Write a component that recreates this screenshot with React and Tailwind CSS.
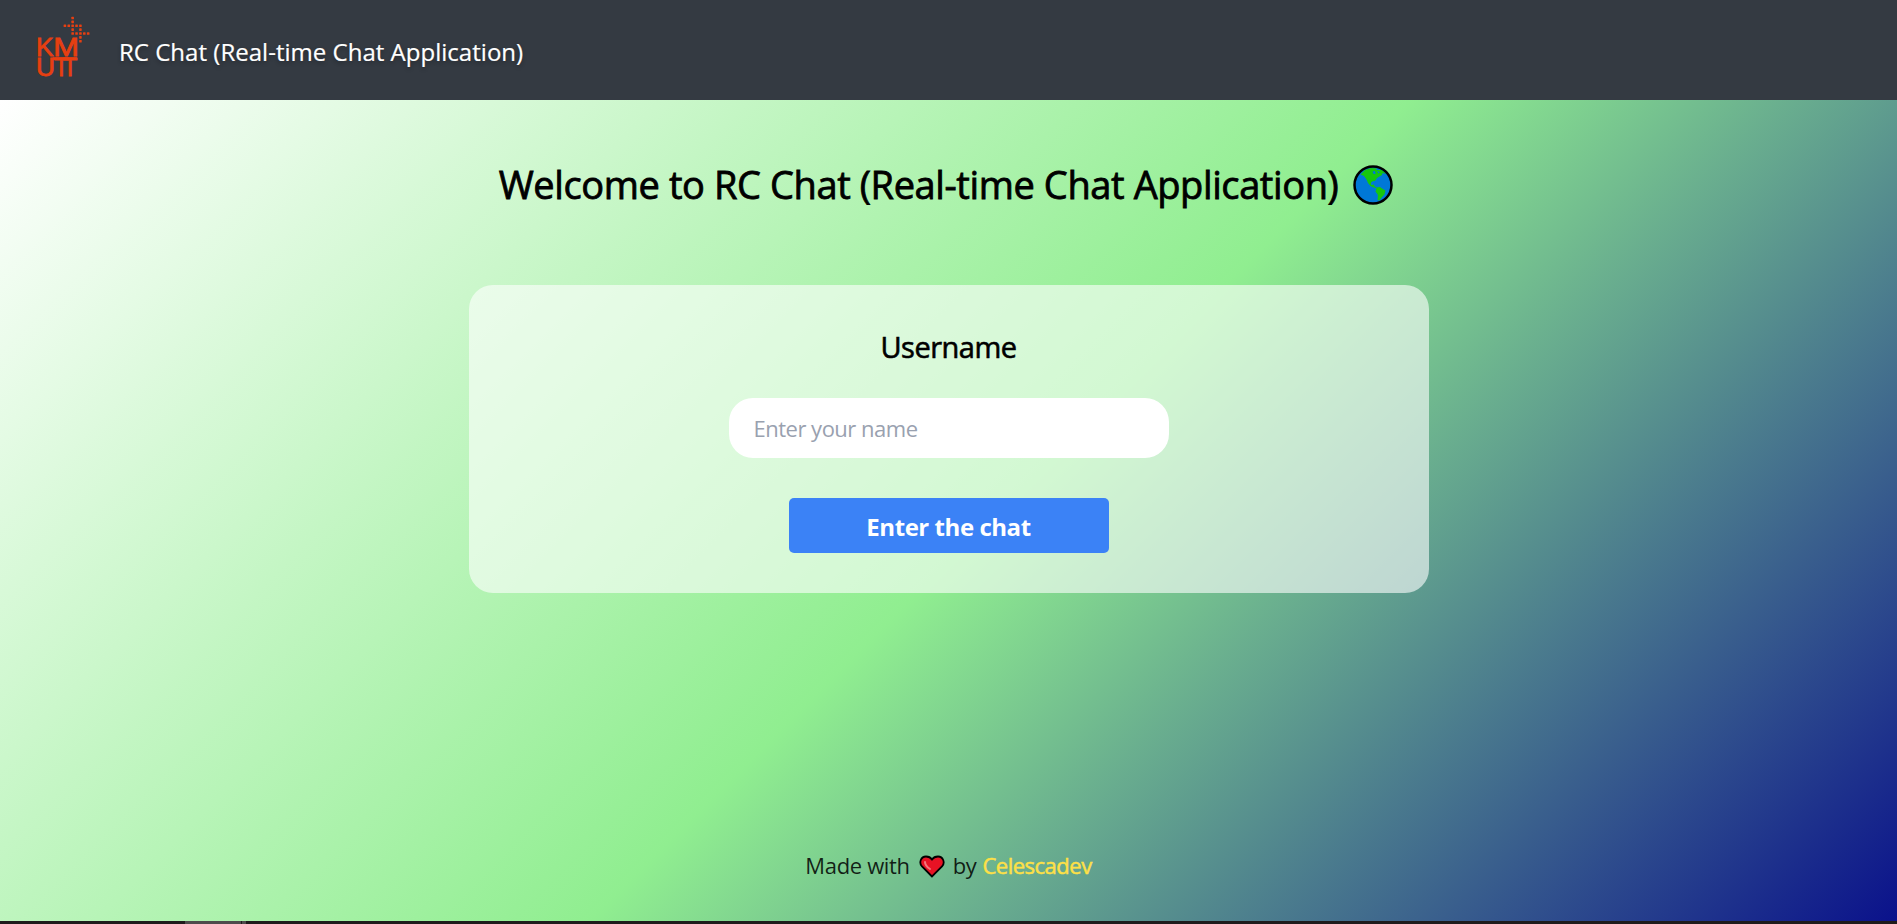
function Logo() {
  const dots = [
    [2, 0], [2, 1], [0, 2], [1, 2], [2, 2], [3, 2], [4, 2], [2, 3], [4, 3],
    [2, 4], [3, 4], [4, 4], [5, 4], [6, 4], [4, 5], [4, 6],
  ];
  const type = { fontFamily: "Liberation Sans", fontSize: 26.6, stroke: "#e73f11", strokeWidth: 0.8 };
  return (
    <svg className="block h-[100px] w-[119px] shrink-0" viewBox="0 0 119 100" fill="#e73f11">
      {dots.map(([c, r]) => (
        <rect key={`${c}-${r}`} x={63.6 + c * 3.88} y={16.7 + r * 3.88} width="2.6" height="2.6" rx="0.6" />
      ))}
      <text x="36" y="56.2" textLength="17.6" lengthAdjust="spacingAndGlyphs" {...type}>K</text>
      <text x="53.3" y="56.2" textLength="25.7" lengthAdjust="spacingAndGlyphs" {...type}>M</text>
      <text x="36" y="75.8" textLength="19" lengthAdjust="spacingAndGlyphs" {...type}>U</text>
      <text transform="scale(0.9 1)" x="60 69.6" y="75.8" {...type}>TT</text>
      <rect x="52.8" y="57.2" width="24.2" height="2.8" />
    </svg>
  );
}

function Globe() {
  return (
    <svg className="ml-[15px] h-10 w-10 shrink-0" viewBox="0 0 40 40">
      <circle cx="20" cy="20" r="18.5" fill="#0078d7" />
      <path d="M7.500 9.500 L12 5 L18 3 L24 3.500 L23 5 L29 5 L33 9 L29.500 8 L29 10 L26.500 11.500 L24 13 L22 16 L20 16 L18 17.500 L18 20 L21 19.500 L21.500 21.500 L24 22.500 L22 23 L17.500 21 L15 18 L13.500 14.500 L11 11 Z" fill="#16c60c" />
      <path d="M19.500 6.500 L22 6 L22.500 9 L20.500 9 Z M24 6 L27 7 L25.500 8.500 Z" fill="#0078d7" />
      <path d="M23.500 22.500 L27 22 L29 23.500 L32.500 25.500 L31.500 29.500 L29 32 L26.500 35.500 L24.500 35 L25 30 L22.500 26.500 Z" fill="#16c60c" />
      <circle cx="20" cy="20" r="18.5" fill="none" stroke="#000" strokeWidth="2.5" />
    </svg>
  );
}

function Heart() {
  return (
    <svg className="mt-[3px] mr-2 ml-[9px] h-6 w-[26px] shrink-0" viewBox="0 0 26 24">
      <path d="M13 21.500 L3 11.500 C-0.500 7.500 2 1.500 7 1.500 C10 1.500 12 3 13 4.500 C14 3 16 1.500 19 1.500 C24 1.500 26.500 7.500 23 11.500 Z" fill="#e81224" stroke="#000" strokeWidth="1.8" />
      <path d="M6 7 C6 9.500 8 12 11 14" fill="none" stroke="#f4767c" strokeWidth="2" strokeLinecap="round" />
    </svg>
  );
}

export default function App() {
  return (
    <div className="flex h-[924px] flex-col overflow-hidden font-['Open_Sans','Noto_Sans',sans-serif]">
      <header className="flex h-[100px] shrink-0 items-center bg-[#343a42] text-white">
        <Logo />
        <span className="mt-1 whitespace-nowrap text-[24px] tracking-[0.02px] [-webkit-text-stroke:0.2px_currentColor] [text-shadow:0_2px_4px_rgba(0,0,0,0.3)]">
          RC Chat (Real-time Chat Application)
        </span>
      </header>
      <main className="flex h-[821px] shrink-0 flex-col items-center bg-[linear-gradient(135deg,white,lightgreen,darkblue)] bg-[length:100%_924px] bg-no-repeat">
        <div className="mt-[60px] flex h-[50px] items-center pr-[5px] text-black">
          <h1 className="-mt-0.5 whitespace-nowrap text-[38px] tracking-[-0.4px] [-webkit-text-stroke:0.8px_currentColor]">
            Welcome to RC Chat (Real-time Chat Application)
          </h1>
          <Globe />
        </div>
        <section className="mt-[75px] flex h-[308px] w-[960px] flex-col items-center rounded-3xl bg-white/60 pt-[39px]">
          <label htmlFor="username" className="h-[74px] text-[29px] leading-[45px] tracking-[-0.5px] text-black [-webkit-text-stroke:0.6px_currentColor]">
            Username
          </label>
          <input
            id="username"
            placeholder="Enter your name"
            className="h-[60px] w-[440px] rounded-3xl bg-white px-[25px] text-[22px] tracking-[-0.5px] outline-none placeholder:text-gray-400"
          />
          <button className="mt-10 h-[55px] w-80 rounded-[5px] bg-[#3b82f6] pt-0.5 text-[24px] font-bold tracking-[-0.45px] text-white">
            Enter the chat
          </button>
        </section>
        <footer className="mt-auto mb-[38px] flex h-9 items-center whitespace-nowrap text-[22px] tracking-[-0.35px] text-black/85">
          <span>Made with</span>
          <Heart />
          <span>by</span>
          <a className="ml-1.5 tracking-[-0.5px] text-[#fde047] [-webkit-text-stroke:0.5px_currentColor]">Celescadev</a>
        </footer>
      </main>
      <div className="flex h-[3px] shrink-0 bg-[#1f1b1c] pl-[185px]">
        <div className="w-14 bg-[#4e4b4c]" />
        <div className="ml-px w-1 bg-[#4e4b4c]" />
      </div>
    </div>
  );
}
